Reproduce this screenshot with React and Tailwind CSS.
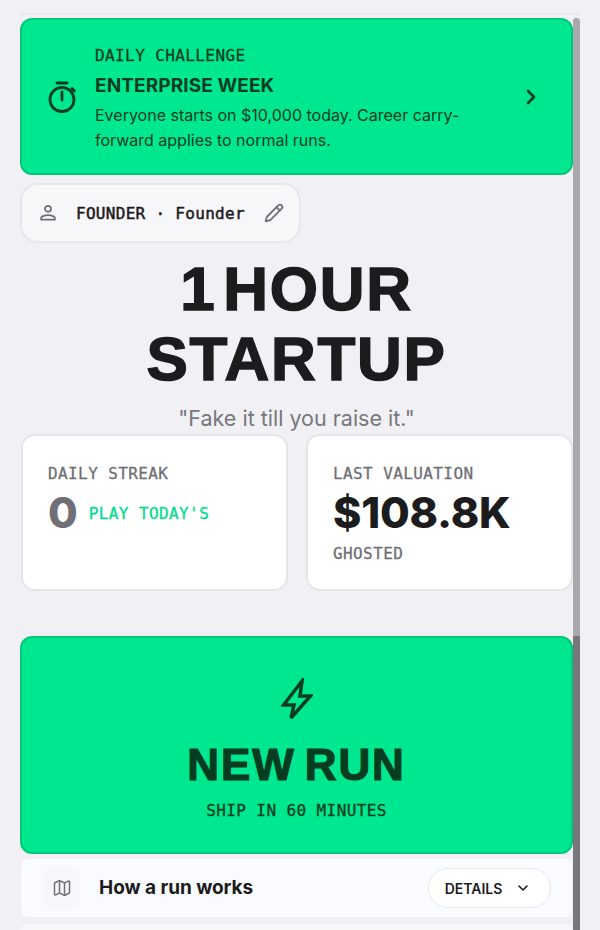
import { ChevronDown, ChevronRight, Map, Pencil } from 'lucide-react';

const sans = "font-['Inter',sans-serif]";
const mono = "font-['DejaVu_Sans_Mono',monospace] [-webkit-text-stroke:0.3px]";
const display = "font-['Liberation_Sans',sans-serif]";

// el cronómetro tiene la aguja vertical, no coincide con el de lucide
function StopwatchIcon() {
  return (
    <svg width="30" height="32" viewBox="0 0 30 32" fill="none" stroke="currentColor" strokeWidth="2.8" className="shrink-0">
      <circle cx="15" cy="18.5" r="12" />
      <path d="M10 2h10M15 11v8M25 7.5l2.5 2.5" strokeLinecap="round" />
    </svg>
  );
}

function PersonIcon() {
  return (
    <svg width="18" height="18" viewBox="0 0 18 18" fill="none" stroke="#6f6f75" strokeWidth="1.7">
      <circle cx="9" cy="4.8" r="3" />
      <path d="M2 15.6v-1.4c0-1.6 3-3 7-3s7 1.4 7 3v1.4z" strokeLinejoin="round" />
    </svg>
  );
}

function BoltIcon() {
  return (
    <svg width="32" height="43" viewBox="0 0 32 43" fill="none" stroke="currentColor" strokeWidth="3.5">
      <path d="M21 3 2.5 27H13l-3 13 19.5-22H19z" />
    </svg>
  );
}

function StatCard({ label, children }) {
  return (
    <div className="h-[157px] rounded-[14px] border-2 border-[#e6e6ea] bg-white pl-[25px] pt-[28px]">
      <div className={`${mono} text-[16px] leading-[20px] tracking-[0.4px] text-[#6f6f75]`}>{label}</div>
      {children}
    </div>
  );
}

export default function App() {
  return (
    <div className={`${sans} relative h-[930px] w-[600px] overflow-hidden bg-[#f0f0f5]`}>
      {/* barra de scroll de la captura */}
      <div className="absolute left-[573px] top-[18px] h-[618px] w-[7px] rounded-t-[3px] bg-[#a9a9ad]" />
      <div className="absolute left-[573px] top-[636px] h-[294px] w-[7px] bg-[#77777c]" />

      <div className="flex w-[573px] flex-col pl-5 pt-[13px]">
        <div className="h-[2px] w-[560px] bg-[#e8e8ed]" />

        <div className="mt-[3px] flex h-[157px] items-center rounded-[12px] border-2 border-[#00c877] bg-[#00e88f] pl-[25px] pr-[28px] text-[#063d20]">
          <StopwatchIcon />
          <div className="ml-[18px] flex-1 pt-[5px]">
            <div className={`${mono} text-[16px] leading-[20px] tracking-[0.4px]`}>DAILY CHALLENGE</div>
            <div className="mt-[8px] text-[19px] font-bold leading-[24px] tracking-[0.1px]">ENTERPRISE WEEK</div>
            <div className="mt-[5px] w-[390px] text-[16px] leading-[25px]">
              Everyone starts on $10,000 today. Career carry-forward applies to normal runs.
            </div>
          </div>
          <ChevronRight size={24} strokeWidth={2.6} className="shrink-0" />
        </div>

        <div className="mt-2 flex h-[60px] w-[281px] items-center rounded-[18px] border-2 border-[#e8e8ec] bg-[#f7f7fa] pl-[17px] pr-[15px]">
          <PersonIcon />
          <span className={`${mono} ml-[19px] mt-[2px] flex-1 text-[16px] tracking-[0.3px] text-[#1c1c1e] [-webkit-text-stroke:0.5px]`}>FOUNDER · Founder</span>
          <Pencil size={20} strokeWidth={2.2} className="text-[#6f6f75]" />
        </div>

        <h1 className={`${display} mt-[11px] text-center text-[62px] font-bold leading-[70px] tracking-[1.7px] text-[#1c1c1e] [word-spacing:-12px] [-webkit-text-stroke:1.5px_#1c1c1e]`}>
          1 HOUR
          <br />
          STARTUP
        </h1>
        <p className="mt-[11px] text-center text-[21.5px] leading-[26px] text-[#77777c]">"Fake it till you raise it."</p>

        <div className="mt-[3px] grid grid-cols-2 gap-[18px] pl-[1px]">
          <StatCard label="DAILY STREAK">
            <div className="mt-[4px] flex items-center">
              <span className="text-[43px] font-extrabold leading-[48px] text-[#6f6f75]">0</span>
              <span className={`${mono} ml-[11px] mt-[4px] text-[16px] tracking-[0.4px] text-[#00dc8c]`}>PLAY TODAY'S</span>
            </div>
          </StatCard>
          <StatCard label="LAST VALUATION">
            <div className="mt-[4px] text-[43px] font-extrabold leading-[48px] tracking-[-0.2px] text-[#1c1c1e]">$108.8K</div>
            <div className={`${mono} mt-[8px] text-[16px] leading-[20px] tracking-[0.4px] text-[#6f6f75]`}>GHOSTED</div>
          </StatCard>
        </div>

        <div className="mt-[45px] flex h-[218px] flex-col items-center rounded-[12px] border-2 border-[#00c877] bg-[#00e88f] pt-[40px] text-[#063d20]">
          <BoltIcon />
          <div className={`${display} mt-[17px] text-[44px] font-bold leading-[54px] tracking-[1.9px] [word-spacing:-5px] [-webkit-text-stroke:1.2px_#063d20]`}>NEW RUN</div>
          <div className={`${mono} mt-[9px] text-[16px] leading-[20px] tracking-[0.4px]`}>SHIP IN 60 MINUTES</div>
        </div>

        <div className="mt-[4px] flex h-[60px] items-center rounded-[8px] border border-[#f0f0f4] bg-[#fafbfe] pl-[23px] pr-[21px]">
          <div className="flex h-[40px] w-[36px] items-center justify-center rounded-[6px] bg-[#f6f7fa]">
            <Map size={20} strokeWidth={1.8} className="text-[#6f6f75]" />
          </div>
          <span className="ml-[19px] mt-[1px] flex-1 text-[19px] font-bold tracking-[-0.05px] text-[#1c1c1e]">How a run works</span>
          <div className="flex h-[40px] w-[123px] items-center justify-center gap-[13px] rounded-full border border-[#e8e8ec] bg-white pr-[3px]">
            <span className="text-[14px] font-semibold text-[#1c1c1e]">DETAILS</span>
            <ChevronDown size={16} strokeWidth={2.4} className="text-[#1c1c1e]" />
          </div>
        </div>

        <div className="mt-[6px] h-[20px] rounded-t-[8px] bg-[#f8f8fb]" />
      </div>
    </div>
  );
}
